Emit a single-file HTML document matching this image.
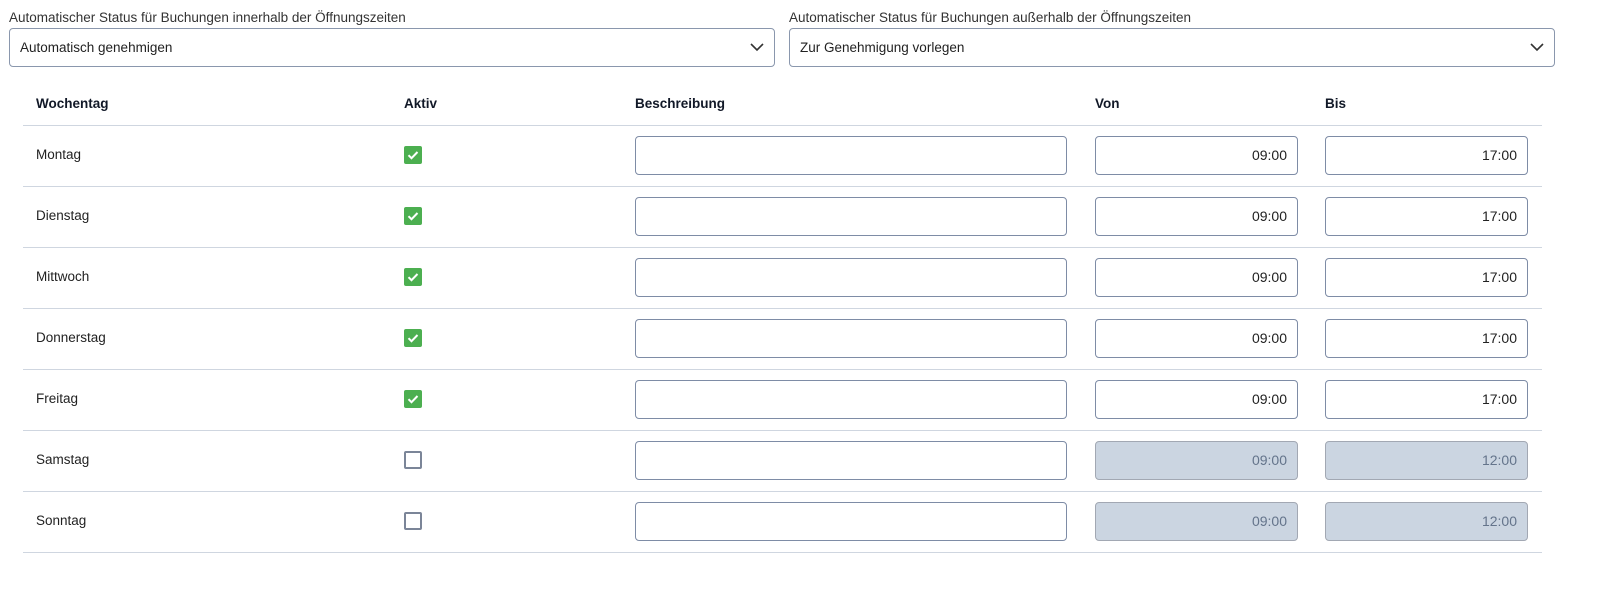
<!DOCTYPE html>
<html><head><meta charset="utf-8"><style>
*{box-sizing:border-box;margin:0;padding:0}
body{width:1599px;height:589px;background:#fff;font-family:"Liberation Sans",Roboto,sans-serif;font-size:13.5px;color:#1f2937;position:relative;overflow:hidden}
.a{position:absolute}
.lbl{font-size:13.5px;color:#333;top:10px}
.sel{top:28px;height:39px;border:1px solid #8a97ad;border-radius:4px;padding:0 10px;line-height:37px;font-size:13.5px;color:#222}
.sel svg{position:absolute;right:10px;top:13px}
.th{top:96px;font-weight:bold;font-size:13.5px;color:#111827}
.line{left:23px;width:1519px;height:1px;background:#cfd6e0}
.inp{height:39px;border:1px solid #7e8ca6;border-radius:4px;background:#fff;text-align:right;padding-right:10px;line-height:37px;font-size:14px;color:#222}
.dis{background:#cbd5e1;border-color:#a2a8b3;color:#64748b}
.cb{width:18px;height:18px;border-radius:2px}
.on{background:#4caf50}
.off{border:2px solid #7b8598;background:#fff}
.day{font-size:13.5px;color:#222}
</style></head><body>
<div class="a lbl" style="left:9px">Automatischer Status für Buchungen innerhalb der Öffnungszeiten</div>
<div class="a lbl" style="left:789px">Automatischer Status für Buchungen außerhalb der Öffnungszeiten</div>
<div class="a sel" style="left:9px;width:766px">Automatisch genehmigen<svg width="14" height="10" viewBox="0 0 14 10"><path d="M1 2l6 6 6-6" fill="none" stroke="#333" stroke-width="1.6"/></svg></div>
<div class="a sel" style="left:789px;width:766px">Zur Genehmigung vorlegen<svg width="14" height="10" viewBox="0 0 14 10"><path d="M1 2l6 6 6-6" fill="none" stroke="#333" stroke-width="1.6"/></svg></div>
<div class="a th" style="left:36px">Wochentag</div>
<div class="a th" style="left:404px">Aktiv</div>
<div class="a th" style="left:635px">Beschreibung</div>
<div class="a th" style="left:1095px">Von</div>
<div class="a th" style="left:1325px">Bis</div>
<div class="a line" style="top:125px"></div>
<div id="rows"></div>
<script>
var d=[["Montag",1,"17:00"],["Dienstag",1,"17:00"],["Mittwoch",1,"17:00"],["Donnerstag",1,"17:00"],["Freitag",1,"17:00"],["Samstag",0,"12:00"],["Sonntag",0,"12:00"]];
var h="";
d.forEach(function(r,i){var y=126+i*61;var dis=r[1]?"":" dis";
h+='<div class="a day" style="left:36px;top:'+(y+21)+'px">'+r[0]+'</div>';
h+='<div class="a cb '+(r[1]?'on':'off')+'" style="left:404px;top:'+(y+20)+'px">'+(r[1]?'<svg width="18" height="18" viewBox="0 0 18 18"><path d="M4.5 9.2l3 3 6-6.2" fill="none" stroke="#fff" stroke-width="2"/></svg>':'')+'</div>';
h+='<div class="a inp" style="left:635px;width:432px;top:'+(y+10)+'px"></div>';
h+='<div class="a inp'+dis+'" style="left:1095px;width:203px;top:'+(y+10)+'px">09:00</div>';
h+='<div class="a inp'+dis+'" style="left:1325px;width:203px;top:'+(y+10)+'px">'+r[2]+'</div>';
h+='<div class="a line" style="top:'+(y+60)+'px"></div>';});
document.getElementById("rows").innerHTML=h;
</script>
</body></html>
